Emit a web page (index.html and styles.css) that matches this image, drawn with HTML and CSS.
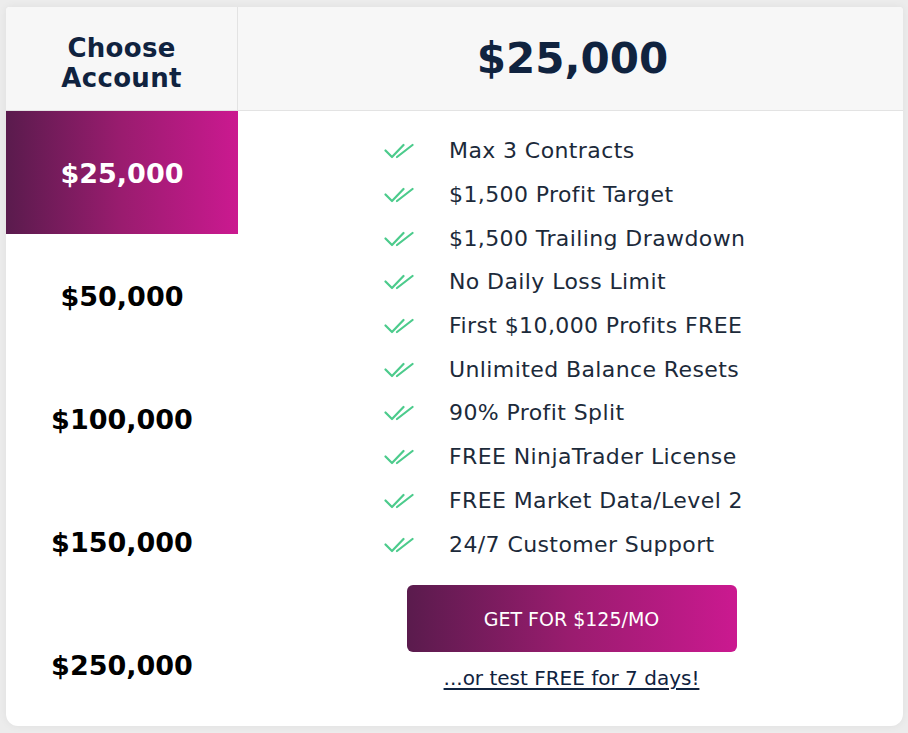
FILE: index.html
```html
<!DOCTYPE html>
<html>
<head>
<meta charset="utf-8">
<link rel="stylesheet" href="styles.css">
</head>
<body>
<div class="card">
  <div class="head-left"><span>Choose</span><span>Account</span></div>
  <div class="head-right">$25,000</div>
  <div class="tabs">
    <div class="tab active">$25,000</div>
    <div class="tab">$50,000</div>
    <div class="tab">$100,000</div>
    <div class="tab">$150,000</div>
    <div class="tab">$250,000</div>
  </div>
  <div class="detail">
    <ul class="features">
      <li><svg class="chk" viewBox="0 0 30 16"><path d="M1.5 7.5 L8 14 L19.5 2"/><path d="M13 14 L28.5 2"/></svg><span>Max 3 Contracts</span></li>
      <li><svg class="chk" viewBox="0 0 30 16"><path d="M1.5 7.5 L8 14 L19.5 2"/><path d="M13 14 L28.5 2"/></svg><span>$1,500 Profit Target</span></li>
      <li><svg class="chk" viewBox="0 0 30 16"><path d="M1.5 7.5 L8 14 L19.5 2"/><path d="M13 14 L28.5 2"/></svg><span>$1,500 Trailing Drawdown</span></li>
      <li><svg class="chk" viewBox="0 0 30 16"><path d="M1.5 7.5 L8 14 L19.5 2"/><path d="M13 14 L28.5 2"/></svg><span>No Daily Loss Limit</span></li>
      <li><svg class="chk" viewBox="0 0 30 16"><path d="M1.5 7.5 L8 14 L19.5 2"/><path d="M13 14 L28.5 2"/></svg><span>First $10,000 Profits FREE</span></li>
      <li><svg class="chk" viewBox="0 0 30 16"><path d="M1.5 7.5 L8 14 L19.5 2"/><path d="M13 14 L28.5 2"/></svg><span>Unlimited Balance Resets</span></li>
      <li><svg class="chk" viewBox="0 0 30 16"><path d="M1.5 7.5 L8 14 L19.5 2"/><path d="M13 14 L28.5 2"/></svg><span>90% Profit Split</span></li>
      <li><svg class="chk" viewBox="0 0 30 16"><path d="M1.5 7.5 L8 14 L19.5 2"/><path d="M13 14 L28.5 2"/></svg><span>FREE NinjaTrader License</span></li>
      <li><svg class="chk" viewBox="0 0 30 16"><path d="M1.5 7.5 L8 14 L19.5 2"/><path d="M13 14 L28.5 2"/></svg><span>FREE Market Data/Level 2</span></li>
      <li><svg class="chk" viewBox="0 0 30 16"><path d="M1.5 7.5 L8 14 L19.5 2"/><path d="M13 14 L28.5 2"/></svg><span>24/7 Customer Support</span></li>
    </ul>
    <a class="btn" href="#">GET FOR $125/MO</a>
    <a class="trial" href="#">...or test FREE for 7 days!</a>
  </div>
</div>
</body>
</html>
```
FILE: styles.css
```css
html, body {
  margin: 0;
  padding: 0;
}
body {
  background: #ececec;
  font-family: "DejaVu Sans", "Open Sans", sans-serif;
  width: 908px;
  height: 733px;
  overflow: hidden;
}
.card {
  margin: 7px 0 0 6px;
  width: 897px;
  height: 719px;
  background: #ffffff;
  border-radius: 4px 4px 12px 12px;
  box-shadow: 0 0 8px rgba(0, 0, 0, 0.06);
  display: grid;
  grid-template-columns: 232px 1fr;
  grid-template-rows: 104px 1fr;
  overflow: hidden;
}
.head-left {
  background: #f7f7f7;
  border-right: 1px solid #e3e3e3;
  border-bottom: 1px solid #e3e3e3;
  display: flex;
  flex-direction: column;
  align-items: center;
  justify-content: center;
  text-align: center;
  font-size: 26px;
  line-height: 30px;
  font-weight: 700;
  color: #10233f;
  padding-top: 9px;
  letter-spacing: 0.3px;
}
.head-right {
  background: #f7f7f7;
  border-bottom: 1px solid #e3e3e3;
  display: flex;
  align-items: center;
  justify-content: center;
  font-size: 42px;
  font-weight: 700;
  color: #10233f;
  padding-left: 4px;
  padding-bottom: 1px;
}
.tabs {
  display: flex;
  flex-direction: column;
}
.tab {
  height: 123px;
  box-sizing: border-box;
  padding-top: 2px;
  flex: none;
  display: flex;
  align-items: center;
  justify-content: center;
  font-size: 27px;
  font-weight: 700;
  color: #000;
}
.tab.active {
  background: linear-gradient(90deg, #5a1b4d 0%, #9a1c6f 50%, #cb1990 100%);
  color: #fff;
}
.detail {
  display: flex;
  flex-direction: column;
  align-items: center;
}
.features {
  list-style: none;
  margin: 18px 0 0 0;
  padding: 0 0 0 146px;
  align-self: stretch;
}
.features li {
  height: 43.7px;
  display: flex;
  align-items: center;
  font-size: 22px;
  letter-spacing: 0.4px;
  color: #1c2a3a;
}
.chk {
  width: 30px;
  height: 16px;
  margin-right: 35px;
  margin-top: 1px;
  flex: none;
  fill: none;
  stroke: #4ccb8c;
  stroke-width: 2.2;
  stroke-linecap: round;
  stroke-linejoin: round;
}
.btn {
  margin-top: 19px;
  width: 330px;
  height: 67px;
  box-sizing: border-box;
  padding-top: 2px;
  border-radius: 6px;
  background: linear-gradient(90deg, #5a1b4d 0%, #9a1c6f 50%, #cb1990 100%);
  color: #fff;
  text-decoration: none;
  font-size: 19px;
  display: flex;
  align-items: center;
  justify-content: center;
  margin-left: 2px;
}
.trial {
  margin-top: 14px;
  font-size: 20px;
  color: #10233f;
  text-decoration: underline;
  text-underline-offset: 3px;
  margin-left: 2px;
}
```
